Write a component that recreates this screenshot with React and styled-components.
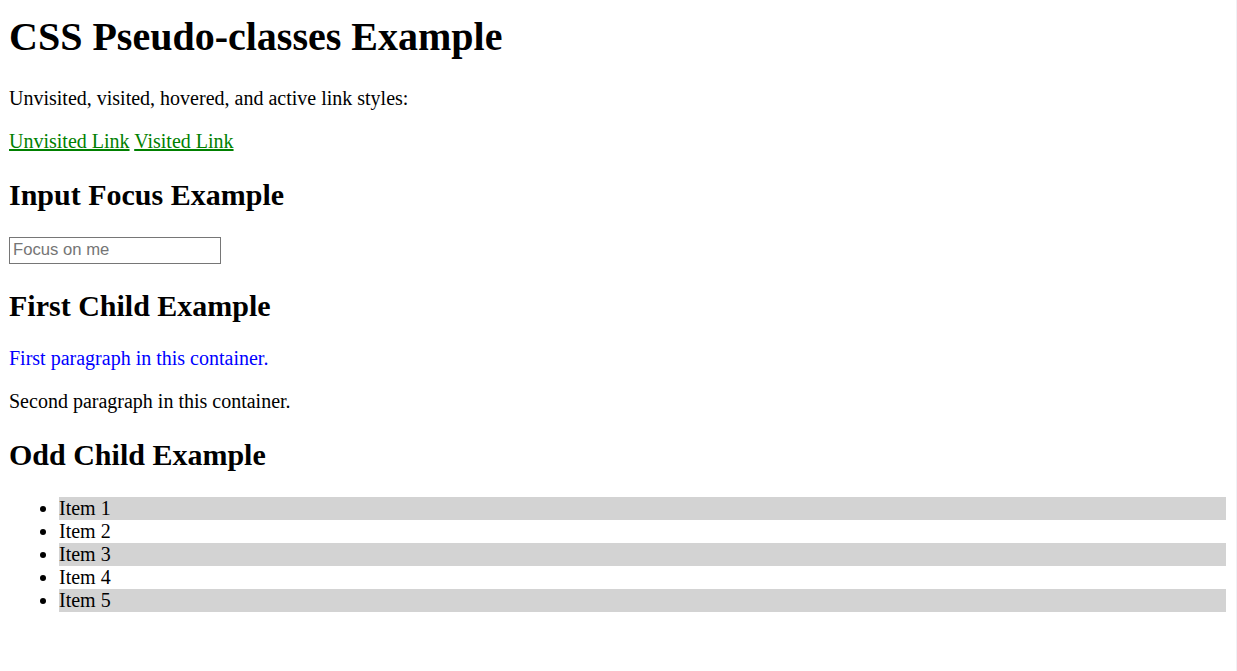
import React from "react";
import styled, { createGlobalStyle } from "styled-components";

const GlobalStyle = createGlobalStyle`
  html {
    background: #fff;
    min-height: 100%;
    border-right: 1px solid #f0f0f4;
  }
  body {
    margin: 0 10px 10px 9px;
    padding-top: 0.1px;
    font-family: "Liberation Serif", "Times New Roman", serif;
    font-size: 20px;
    color: #000;
  }
`;

const Title = styled.h1`
  font-size: 40px;
  margin: 13px 0 0.67em;
`;

const Heading = styled.h2`
  font-size: 30px;
  margin: 0.83em 0;
`;

const Para = styled.p`
  margin: 1em 0;
  color: ${p => (p.$first ? "#0000ff" : "#000")};
`;

const Link = styled.a`
  color: green;
  text-decoration: underline;
`;

const FocusInput = styled.input`
  box-sizing: border-box;
  width: 212px;
  height: 27px;
  font-family: Arial, "Liberation Sans", sans-serif;
  font-size: 16.67px;
  border: 1px solid #767676;
  padding: 1px 3px;
  margin: 0;
  &::placeholder {
    color: #757575;
  }
`;

const List = styled.ul`
  margin: 1em 0;
  padding-left: 50px;
`;

const Item = styled.li`
  background: ${p => (p.$odd ? "#d3d3d3" : "transparent")};
`;

export default function App() {
  const items = [1, 2, 3, 4, 5];
  return (
    <>
      <GlobalStyle />
      <Title>CSS Pseudo-classes Example</Title>
      <Para>Unvisited, visited, hovered, and active link styles:</Para>
      <Para>
        <Link href="#">Unvisited Link</Link> <Link href="#">Visited Link</Link>
      </Para>
      <Heading>Input Focus Example</Heading>
      <FocusInput type="text" placeholder="Focus on me" />
      <Heading>First Child Example</Heading>
      <div>
        <Para $first>First paragraph in this container.</Para>
        <Para>Second paragraph in this container.</Para>
      </div>
      <Heading>Odd Child Example</Heading>
      <List>
        {items.map(n => (
          <Item key={n} $odd={n % 2 === 1}>
            Item {n}
          </Item>
        ))}
      </List>
    </>
  );
}
